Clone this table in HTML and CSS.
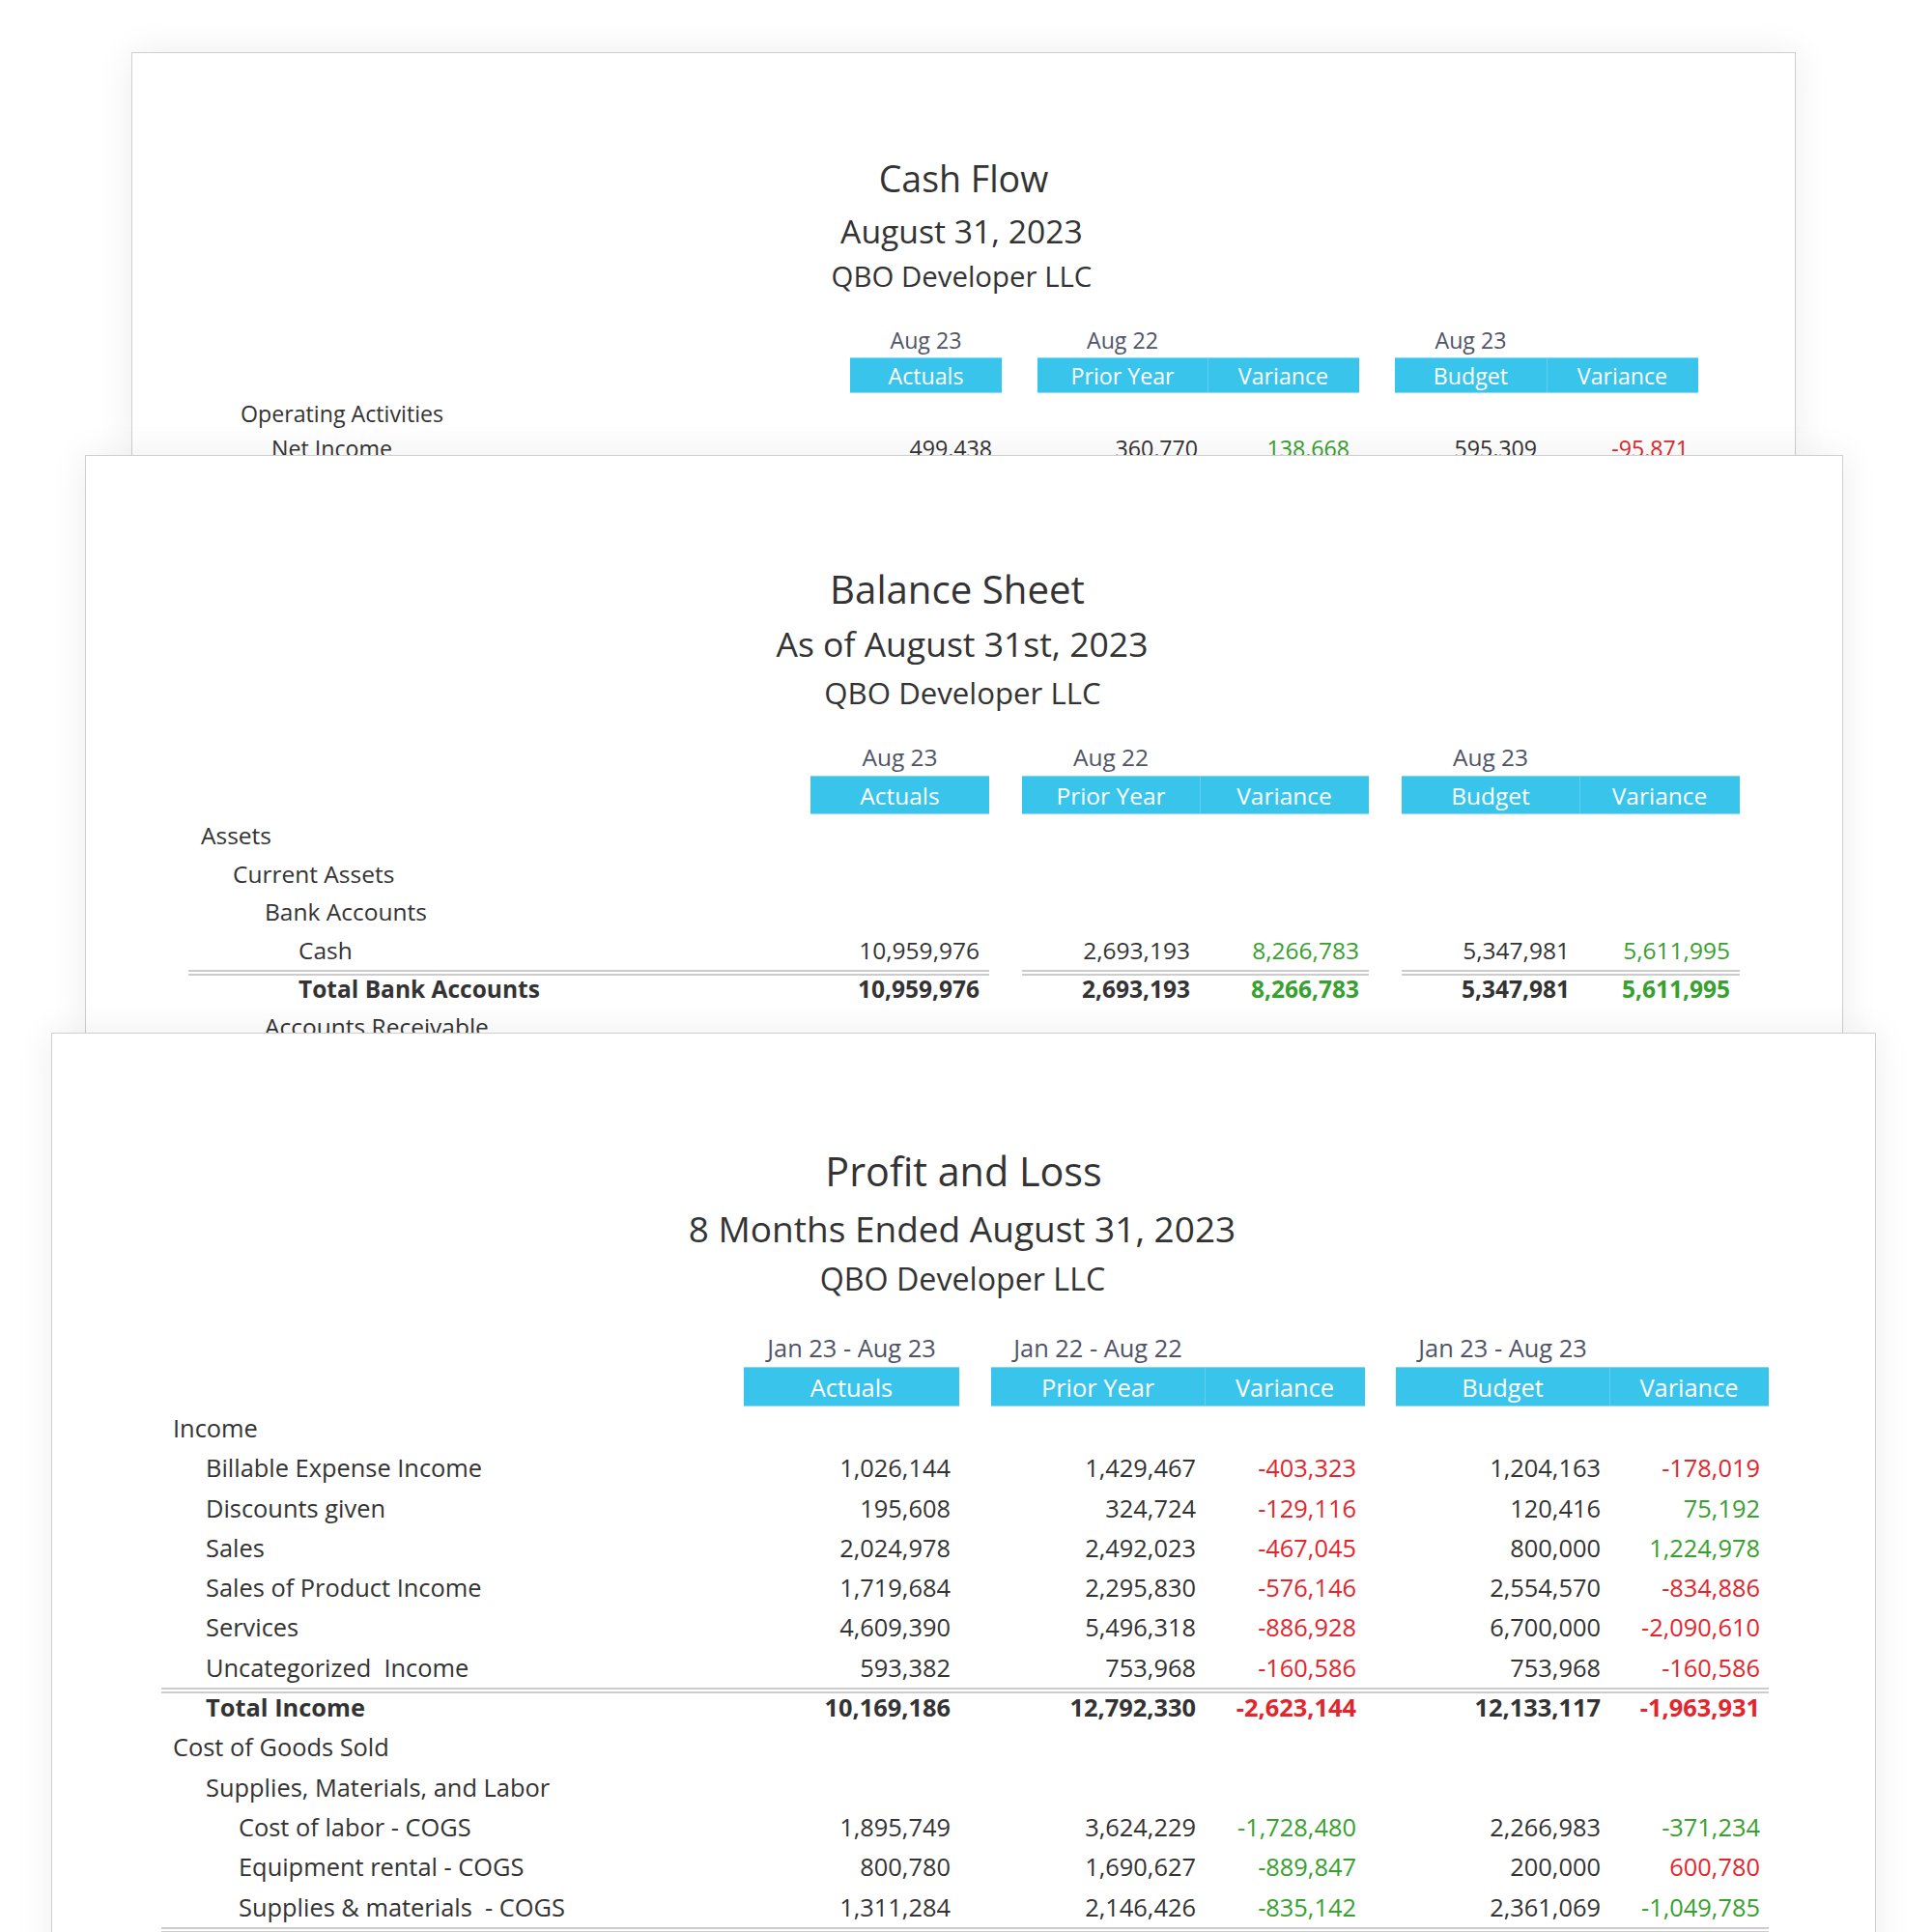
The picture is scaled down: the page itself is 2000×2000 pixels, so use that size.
FILE: index.html
```html
<!DOCTYPE html>
<html lang="en">
<head>
<meta charset="utf-8">
<title>Reports</title>
<link rel="stylesheet" href="styles.css">
</head>
<body>
<div class="stack">

  <section class="card card-cf">
    <header class="head">
      <h1>Cash Flow</h1>
      <h2>August 31, 2023</h2>
      <h3>QBO Developer LLC</h3>
    </header>
    <div class="tbl">
      <div class="row dates"><span></span><span>Aug 23</span><span></span><span>Aug 22</span><span></span><span></span><span>Aug 23</span><span></span></div>
      <div class="row bar"><span class="blank"></span><span class="hc">Actuals</span><span class="blank"></span><span class="hc">Prior Year</span><span class="hc sep">Variance</span><span class="blank"></span><span class="hc">Budget</span><span class="hc sep">Variance</span></div>
      <div class="body">
        <div class="row"><span class="lb l0">Operating Activities</span><span></span><span></span><span></span><span></span><span></span><span></span><span></span></div>
        <div class="row"><span class="lb l1">Net Income</span><span class="n">499,438</span><span></span><span class="n">360,770</span><span class="n pos">138,668</span><span></span><span class="n">595,309</span><span class="n neg">-95,871</span></div>
      </div>
    </div>
  </section>

  <section class="card card-bs">
    <header class="head">
      <h1>Balance Sheet</h1>
      <h2>As of August 31st, 2023</h2>
      <h3>QBO Developer LLC</h3>
    </header>
    <div class="tbl">
      <div class="row dates"><span></span><span>Aug 23</span><span></span><span>Aug 22</span><span></span><span></span><span>Aug 23</span><span></span></div>
      <div class="row bar"><span class="blank"></span><span class="hc">Actuals</span><span class="blank"></span><span class="hc">Prior Year</span><span class="hc sep">Variance</span><span class="blank"></span><span class="hc">Budget</span><span class="hc sep">Variance</span></div>
      <div class="body">
        <div class="row"><span class="lb l0">Assets</span><span></span><span></span><span></span><span></span><span></span><span></span><span></span></div>
        <div class="row"><span class="lb l1">Current Assets</span><span></span><span></span><span></span><span></span><span></span><span></span><span></span></div>
        <div class="row"><span class="lb l2">Bank Accounts</span><span></span><span></span><span></span><span></span><span></span><span></span><span></span></div>
        <div class="row ruled"><span class="lb l3">Cash</span><span class="n">10,959,976</span><span class="g"></span><span class="n">2,693,193</span><span class="n pos">8,266,783</span><span class="g"></span><span class="n">5,347,981</span><span class="n pos">5,611,995</span></div>
        <div class="row total"><span class="lb l3">Total Bank Accounts</span><span class="n">10,959,976</span><span></span><span class="n">2,693,193</span><span class="n pos">8,266,783</span><span></span><span class="n">5,347,981</span><span class="n pos">5,611,995</span></div>
        <div class="row"><span class="lb l2">Accounts Receivable</span><span></span><span></span><span></span><span></span><span></span><span></span><span></span></div>
      </div>
    </div>
  </section>

  <section class="card card-pl">
    <header class="head">
      <h1>Profit and Loss</h1>
      <h2>8 Months Ended August 31, 2023</h2>
      <h3>QBO Developer LLC</h3>
    </header>
    <div class="tbl">
      <div class="row dates"><span></span><span>Jan 23 - Aug 23</span><span></span><span>Jan 22 - Aug 22</span><span></span><span></span><span>Jan 23 - Aug 23</span><span></span></div>
      <div class="row bar"><span class="blank"></span><span class="hc">Actuals</span><span class="blank"></span><span class="hc">Prior Year</span><span class="hc sep">Variance</span><span class="blank"></span><span class="hc">Budget</span><span class="hc sep">Variance</span></div>
      <div class="body">
        <div class="row"><span class="lb l0">Income</span><span></span><span></span><span></span><span></span><span></span><span></span><span></span></div>
        <div class="row"><span class="lb l1">Billable Expense Income</span><span class="n">1,026,144</span><span></span><span class="n">1,429,467</span><span class="n neg">-403,323</span><span></span><span class="n">1,204,163</span><span class="n neg">-178,019</span></div>
        <div class="row"><span class="lb l1">Discounts given</span><span class="n">195,608</span><span></span><span class="n">324,724</span><span class="n neg">-129,116</span><span></span><span class="n">120,416</span><span class="n pos">75,192</span></div>
        <div class="row"><span class="lb l1">Sales</span><span class="n">2,024,978</span><span></span><span class="n">2,492,023</span><span class="n neg">-467,045</span><span></span><span class="n">800,000</span><span class="n pos">1,224,978</span></div>
        <div class="row"><span class="lb l1">Sales of Product Income</span><span class="n">1,719,684</span><span></span><span class="n">2,295,830</span><span class="n neg">-576,146</span><span></span><span class="n">2,554,570</span><span class="n neg">-834,886</span></div>
        <div class="row"><span class="lb l1">Services</span><span class="n">4,609,390</span><span></span><span class="n">5,496,318</span><span class="n neg">-886,928</span><span></span><span class="n">6,700,000</span><span class="n neg">-2,090,610</span></div>
        <div class="row ruled"><span class="lb l1">Uncategorized  Income</span><span class="n">593,382</span><span class="g"></span><span class="n">753,968</span><span class="n neg">-160,586</span><span class="g"></span><span class="n">753,968</span><span class="n neg">-160,586</span></div>
        <div class="row total"><span class="lb l1">Total Income</span><span class="n">10,169,186</span><span></span><span class="n">12,792,330</span><span class="n neg">-2,623,144</span><span></span><span class="n">12,133,117</span><span class="n neg">-1,963,931</span></div>
        <div class="row"><span class="lb l0">Cost of Goods Sold</span><span></span><span></span><span></span><span></span><span></span><span></span><span></span></div>
        <div class="row"><span class="lb l1">Supplies, Materials, and Labor</span><span></span><span></span><span></span><span></span><span></span><span></span><span></span></div>
        <div class="row"><span class="lb l2">Cost of labor - COGS</span><span class="n">1,895,749</span><span></span><span class="n">3,624,229</span><span class="n pos">-1,728,480</span><span></span><span class="n">2,266,983</span><span class="n pos">-371,234</span></div>
        <div class="row"><span class="lb l2">Equipment rental - COGS</span><span class="n">800,780</span><span></span><span class="n">1,690,627</span><span class="n pos">-889,847</span><span></span><span class="n">200,000</span><span class="n neg">600,780</span></div>
        <div class="row ruled"><span class="lb l2">Supplies &amp; materials  - COGS</span><span class="n">1,311,284</span><span class="g"></span><span class="n">2,146,426</span><span class="n pos">-835,142</span><span class="g"></span><span class="n">2,361,069</span><span class="n pos">-1,049,785</span></div>
      </div>
    </div>
  </section>

</div>
</body>
</html>
```

FILE: styles.css
```css
* { box-sizing: border-box; }

html, body {
  margin: 0;
  height: 2000px;
  overflow: hidden;
  background: #ffffff;
}

body {
  font-family: "Open Sans", "Noto Sans", sans-serif;
  color: #333333;
}

.stack {
  display: flex;
  flex-direction: column;
  align-items: flex-start;
  padding-top: 54px;
}

.card {
  position: relative;
  flex: none;
  background: #ffffff;
  border: 1px solid #cfcfcf;
  border-bottom: 0;
  box-shadow: 0 0 36px rgba(0, 0, 0, 0.075);
  overflow: hidden;
}

.card-cf { margin-left: 136px; width: 1723px; height: 417px; z-index: 1; }
.card-bs { margin-left: 88px; width: 1820px; height: 598px; z-index: 2; }
.card-pl { margin-left: 53px; width: 1889px; height: 1000px; z-index: 3; }

/* ---------- heading ---------- */
.head { text-align: center; color: #333; }
.head h1, .head h2, .head h3 { margin: 0; font-weight: 400; }

.card-cf .head { padding-top: 103px; }
.card-cf .head h1 { font-size: 37.5px; line-height: 54px; }
.card-cf .head h2 { font-size: 33.7px; line-height: 54px; padding-right: 4px; }
.card-cf .head h3 { font-size: 29.4px; line-height: 40px; padding-right: 4px; }

.card-bs .head { padding-top: 110px; }
.card-bs .head h1 { font-size: 40.2px; line-height: 56px; padding-right: 14px; }
.card-bs .head h2 { font-size: 35.5px; line-height: 56px; padding-right: 4px; }
.card-bs .head h3 { font-size: 31.2px; line-height: 46px; padding-right: 3px; }

.card-pl .head { padding-top: 112px; }
.card-pl .head h1 { font-size: 41.3px; line-height: 60px; }
.card-pl .head h2 { font-size: 37px; line-height: 60px; padding-right: 3px; }
.card-pl .head h3 { font-size: 32.2px; line-height: 44px; padding-right: 2px; }

/* ---------- table ---------- */
.row {
  display: grid;
  grid-template-columns: var(--cols);
  white-space: pre;
}

.card-cf .tbl {
  --cols: 1fr 157px 37px 176px 157px 37px 157px 157px;
  padding: 28px 100px 0 100px;
  font-size: 23.2px;
}
.card-bs .tbl {
  --cols: 1fr 185px 34px 184px 175px 34px 184px 166px;
  padding: 24px 106px 0 106px;
  font-size: 24.5px;
}
.card-pl .tbl {
  --cols: 1fr 223px 33px 221px 166px 32px 221px 165px;
  padding: 29px 110px 0 113px;
  font-size: 25.4px;
}

.dates span { text-align: center; color: #4f5467; }
.card-cf .dates { height: 36px; line-height: 36px; }
.card-bs .dates { height: 39px; line-height: 39px; }
.card-pl .dates { height: 40px; line-height: 40px; }

.bar .hc {
  background: #39c4eb;
  color: #ffffff;
  text-align: center;
  border-top: 1px solid #7fd7f2;
  border-bottom: 1px solid #8fdcf3;
  padding-top: 2px;
}
.bar .hc.sep { box-shadow: inset 1px 0 0 #62cfee; }
.card-cf .bar { height: 37px; line-height: 33px; }
.card-bs .bar { height: 40px; line-height: 36px; }
.card-pl .bar { height: 41px; line-height: 37px; }

.card-cf .body { padding-top: 3px; }
.card-bs .body { padding-top: 2px; }
.card-pl .body { padding-top: 2px; }

.card-cf .body .row { height: 36px; line-height: 36px; }
.card-bs .body .row { height: 39.7px; line-height: 39.7px; }
.card-pl .body .row { height: 41.3px; line-height: 41.3px; }

.card-cf .lb { padding-left: 12px; }
.card-cf .l1 { padding-left: 44px; }

.card-bs .lb.l0 { padding-left: 13px; }
.card-bs .lb.l1 { padding-left: 46px; }
.card-bs .lb.l2 { padding-left: 79px; }
.card-bs .lb.l3 { padding-left: 114px; }

.card-pl .lb.l0 { padding-left: 12px; }
.card-pl .lb.l1 { padding-left: 46px; }
.card-pl .lb.l2 { padding-left: 80px; }

.n { text-align: right; padding-right: 9px; color: #333; }
.card-bs .n { padding-right: 10px; }
.card-cf .n { padding-right: 10px; }

.pos { color: #37a02e; }
.neg { color: #e3262d; }

.total { font-weight: 700; }

/* double rule under the last line of a group */
.ruled > span { border-bottom: 6px double #cccccc; }
.card-bs .ruled > .g { border-bottom: 0; }
```
